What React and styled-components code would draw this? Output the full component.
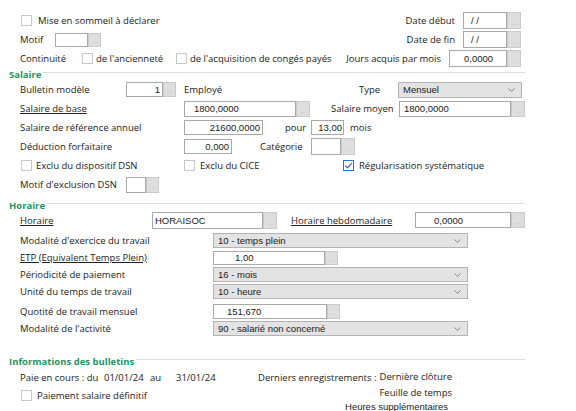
import React from 'react';
import styled, { createGlobalStyle } from 'styled-components';

const GlobalStyle = createGlobalStyle`
  html, body { margin: 0; padding: 0; background: #fff; }
  * { box-sizing: border-box; }
`;

const Page = styled.div`
  width: 576px;
  height: 411px;
  overflow: hidden;
  background: #fff;
  color: #222;
  font-family: "Open Sans", "Noto Sans", sans-serif;
  font-size: 9.5px;
  padding-top: 11px;
`;

const Section = styled.div`
  padding: 0 ${(p) => p.$pr ?? 51}px 0 20px;
`;

const SectionTitle = styled.div`
  display: flex;
  align-items: center;
  height: 12px;
  margin: ${(p) => p.$mt || 0}px 51px 0 9px;
  span {
    color: #1d9466;
    font-weight: 700;
    white-space: nowrap;
  }
  &::after {
    content: '';
    flex: 1;
    height: 1px;
    margin: 0 0 3px 2px;
    background: #dcdcdc;
  }
`;

const Row = styled.div`
  display: flex;
  align-items: center;
  height: ${(p) => p.$h || 19}px;
  margin-top: ${(p) => p.$mt || 0}px;
  white-space: nowrap;
`;

const RightGroup = styled.div`
  display: flex;
  align-items: center;
  margin-left: auto;
`;

const Label = styled.span`
  flex: none;
  width: ${(p) => (p.$w ? `${p.$w}px` : 'auto')};
  margin-left: ${(p) => p.$ml || 0}px;
  margin-right: ${(p) => p.$mr || 0}px;
  text-decoration: ${(p) => (p.$u ? 'underline' : 'none')};
  text-underline-offset: 1px;
`;

const justify = { left: 'flex-start', right: 'flex-end', center: 'center' };

const Field = styled.div`
  flex: none;
  display: flex;
  align-items: center;
  justify-content: ${(p) => justify[p.$align || 'left']};
  width: ${(p) => p.$w}px;
  height: ${(p) => p.$h || 16}px;
  padding: 0 ${(p) => p.$pr ?? 2}px 0 ${(p) => p.$pl ?? 3}px;
  background: #fff;
  border: 1px solid #a9a9a9;
  font-family: "Liberation Sans", Arial, sans-serif;
  font-size: 9.5px;
  color: #1a1a1a;
  overflow: hidden;
`;

const Lookup = styled.div`
  flex: none;
  display: flex;
  align-items: flex-end;
  justify-content: center;
  width: ${(p) => p.$w || 14}px;
  height: ${(p) => p.$h || 16}px;
  background: #dedede;
  border: 1px solid #cacaca;
  color: #bdbdbd;
  font-family: "Liberation Sans", Arial, sans-serif;
  font-size: 7px;
  line-height: 7px;
  padding-bottom: 2px;
`;

const ComboBox = styled.div`
  flex: none;
  display: flex;
  align-items: center;
  justify-content: space-between;
  width: ${(p) => p.$w}px;
  height: ${(p) => p.$h || 15}px;
  padding: 0 6px 0 4px;
  background: #e3e3e3;
  border: 1px solid #b3b3b3;
  font-family: "Liberation Sans", Arial, sans-serif;
  font-size: 9.5px;
  color: #1a1a1a;
`;

const Box = styled.span`
  flex: none;
  display: flex;
  align-items: center;
  justify-content: center;
  width: 11px;
  height: 11px;
  margin-left: ${(p) => p.$ml || 0}px;
  margin-right: ${(p) => p.$mr ?? 5}px;
  background: #fff;
  border: 1px solid ${(p) => (p.$on ? '#2d70c6' : '#c8c8c8')};
`;

const CheckItem = styled.div`
  flex: none;
  display: flex;
  align-items: center;
  width: ${(p) => (p.$w ? `${p.$w}px` : 'auto')};
`;

const Bottom = styled.div`
  display: grid;
  grid-template-columns: 322px 110px;
  padding-left: 20px;
  margin-top: 2px;
`;

const RightStack = styled.div`
  text-align: right;
  white-space: nowrap;
`;

const StackLine = styled.div`
  height: ${(p) => p.$h || 16}px;
  line-height: ${(p) => p.$h || 16}px;
  padding-right: ${(p) => (p.$alt ? 4 : 0)}px;
  font-family: ${(p) => (p.$alt ? '"Liberation Sans", Arial, sans-serif' : 'inherit')};
`;

function Check({ on, ml, mr }) {
  return (
    <Box $on={on} $ml={ml} $mr={mr}>
      {on && (
        <svg width="9" height="9" viewBox="0 0 9 9">
          <polyline points="1.2,4.6 3.5,6.9 7.9,2.1" fill="none" stroke="#2d70c6" strokeWidth="1.3" />
        </svg>
      )}
    </Box>
  );
}

function LookupField({ w, h, bw, value, align, pl, pr }) {
  return (
    <>
      <Field $w={w} $h={h} $align={align} $pl={pl} $pr={pr}>
        {value}
      </Field>
      <Lookup $w={bw} $h={h}>...</Lookup>
    </>
  );
}

function Combo({ w, h, value }) {
  return (
    <ComboBox $w={w} $h={h}>
      <span>{value}</span>
      <svg width="7" height="4" viewBox="0 0 7 4">
        <polyline points="0.5,0.5 3.5,3.4 6.5,0.5" fill="none" stroke="#7a7a7a" strokeWidth="0.9" />
      </svg>
    </ComboBox>
  );
}

export default function App() {
  return (
    <>
      <GlobalStyle />
      <Page>
        <Section $pr={55}>
          <Row>
            <Check ml={1} mr={6} />
            <Label>Mise en sommeil à déclarer</Label>
            <RightGroup>
              <Label $mr={8}>Date début</Label>
              <LookupField w={44} h={17} value="/ /" pl={7} />
            </RightGroup>
          </Row>
          <Row>
            <Label $w={35}>Motif</Label>
            <LookupField w={33} h={14} bw={13} value="" />
            <RightGroup>
              <Label $mr={8}>Date de fin</Label>
              <LookupField w={44} h={17} value="/ /" pl={7} />
            </RightGroup>
          </Row>
          <Row>
            <Label $w={62}>Continuité</Label>
            <CheckItem $w={94}>
              <Check mr={3} />
              <span>de l'ancienneté</span>
            </CheckItem>
            <CheckItem>
              <Check mr={3} />
              <span>de l'acquisition de congés payés</span>
            </CheckItem>
            <RightGroup>
              <Label $mr={8}>Jours acquis par mois</Label>
              <LookupField w={58} h={17} value="0,0000" align="center" />
            </RightGroup>
          </Row>
        </Section>

        <SectionTitle>
          <span>Salaire</span>
        </SectionTitle>
        <Section>
          <Row>
            <Label $w={106}>Bulletin modèle</Label>
            <LookupField w={37} h={15} bw={13} value="1" align="right" />
            <Label $ml={8} $w={175}>Employé</Label>
            <Label $w={39}>Type</Label>
            <Combo w={124} h={16} value="Mensuel" />
          </Row>
          <Row>
            <Label $w={164} $u>Salaire de base</Label>
            <LookupField w={112} h={16} value="1800,0000" pl={9} />
            <Label $ml={21} $w={68}>Salaire moyen</Label>
            <LookupField w={112} h={16} value="1800,0000" pl={4} />
          </Row>
          <Row>
            <Label $w={164}>Salaire de référence annuel</Label>
            <Field $w={79} $h={15} $align="right">21600,0000</Field>
            <Label $ml={22} $w={26}>pour</Label>
            <Field $w={33} $h={15} $align="right" $pr={1}>13,00</Field>
            <Label $ml={6}>mois</Label>
          </Row>
          <Row>
            <Label $w={164}>Déduction forfaitaire</Label>
            <Field $w={48} $h={15} $align="right">0,000</Field>
            <Label $ml={28} $w={51}>Catégorie</Label>
            <LookupField w={30} h={17} value="" />
          </Row>
          <Row>
            <CheckItem $w={164}>
              <Check ml={1} mr={4} />
              <span>Exclu du dispositif DSN</span>
            </CheckItem>
            <CheckItem $w={159}>
              <Check mr={5} />
              <span>Exclu du CICE</span>
            </CheckItem>
            <CheckItem>
              <Check on mr={5} />
              <span>Régularisation systématique</span>
            </CheckItem>
          </Row>
          <Row>
            <Label $w={106}>Motif d'exclusion DSN</Label>
            <LookupField w={20} h={16} bw={13} value="" />
          </Row>
        </Section>

        <SectionTitle $mt={5}>
          <span>Horaire</span>
        </SectionTitle>
        <Section>
          <Row $h={18}>
            <Label $w={132} $u>Horaire</Label>
            <LookupField w={111} h={17} value="HORAISOC" pl={2} />
            <Label $ml={14} $w={124} $u>Horaire hebdomadaire</Label>
            <LookupField w={96} h={16} value="0,0000" pl={18} />
          </Row>
          <Row $h={17} $mt={3}>
            <Label $w={193}>Modalité d'exercice du travail</Label>
            <Combo w={255} value="10 - temps plein" />
          </Row>
          <Row $h={17}>
            <Label $w={193} $u>ETP (Equivalent Temps Plein)</Label>
            <LookupField w={112} h={14} bw={13} value="1,00" pl={21} />
          </Row>
          <Row $h={17}>
            <Label $w={193}>Périodicité de paiement</Label>
            <Combo w={255} value="16 - mois" />
          </Row>
          <Row $h={17}>
            <Label $w={193}>Unité du temps de travail</Label>
            <Combo w={255} value="10 - heure" />
          </Row>
          <Row $h={17} $mt={3}>
            <Label $w={193}>Quotité de travail mensuel</Label>
            <LookupField w={114} h={15} bw={13} value="151,670" pl={13} />
          </Row>
          <Row $h={17}>
            <Label $w={193}>Modalité de l'activité</Label>
            <Combo w={255} value="90 - salarié non concerné" />
          </Row>
        </Section>

        <SectionTitle $mt={18}>
          <span>Informations des bulletins</span>
        </SectionTitle>
        <Bottom>
          <div>
            <Row $h={17}>
              <Label $w={84}>Paie en cours : du</Label>
              <Label $w={46}>01/01/24</Label>
              <Label $w={26}>au</Label>
              <Label $w={82}>31/01/24</Label>
              <Label>Derniers enregistrements :</Label>
            </Row>
            <Row $h={18}>
              <Check ml={1} mr={5} />
              <Label>Paiement salaire définitif</Label>
            </Row>
          </div>
          <RightStack>
            <StackLine>Dernière clôture</StackLine>
            <StackLine $h={15}>Feuille de temps</StackLine>
            <StackLine $h={13} $alt>Heures supplémentaires</StackLine>
          </RightStack>
        </Bottom>
      </Page>
    </>
  );
}
